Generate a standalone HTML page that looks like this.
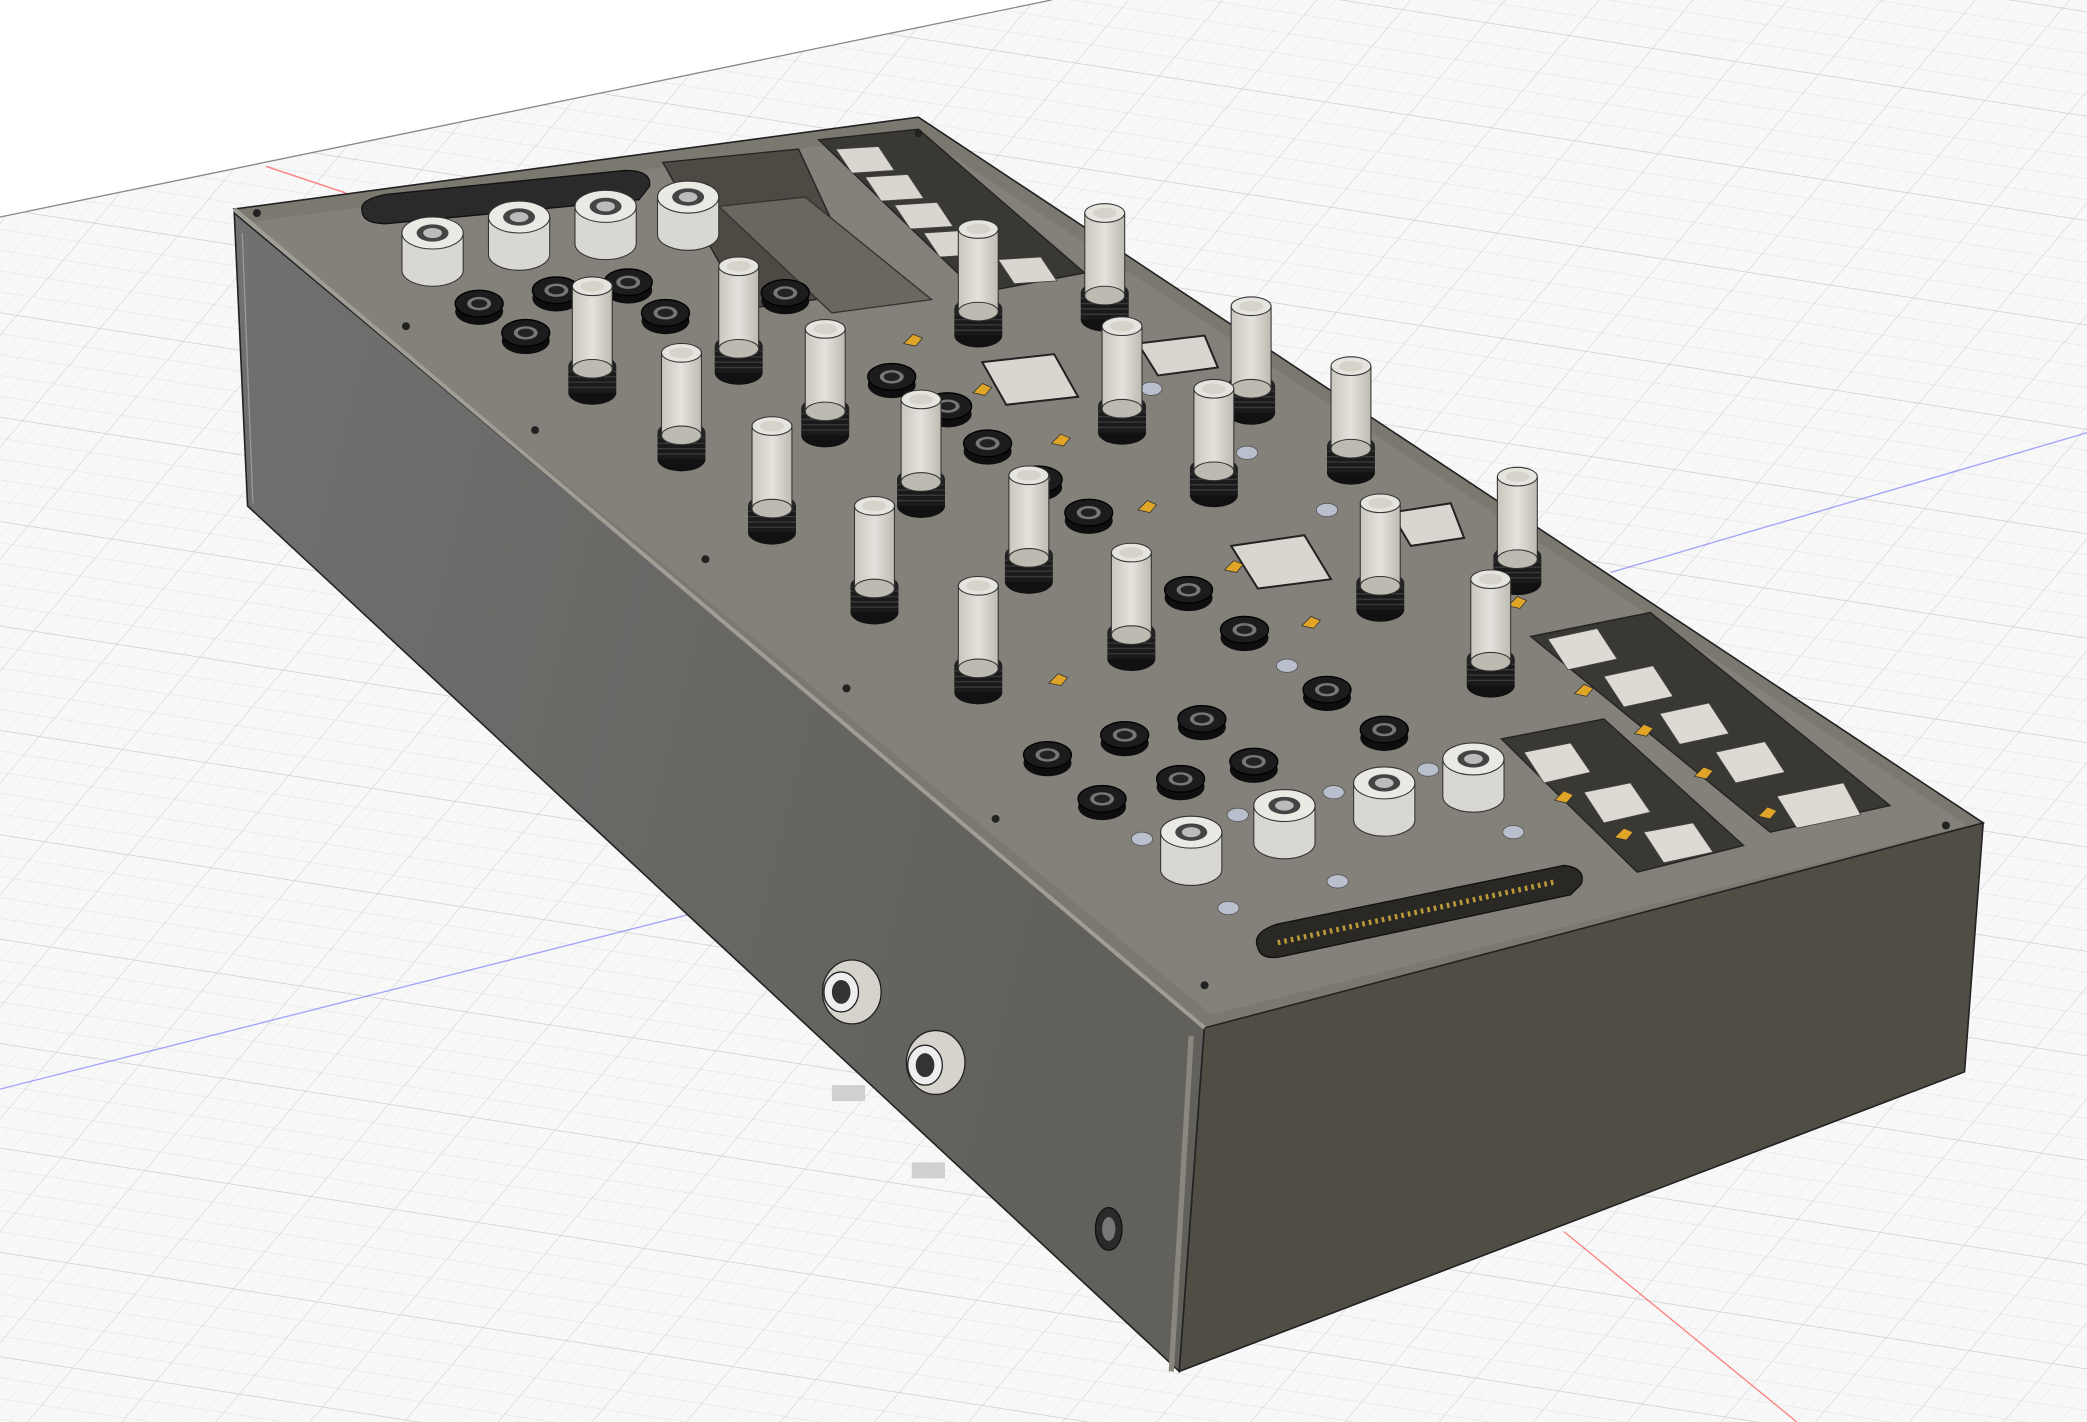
<!DOCTYPE html>
<html><head><meta charset="utf-8"><style>
html,body{margin:0;padding:0;width:2087px;height:1422px;overflow:hidden;background:#fff}
svg{display:block}
</style></head><body>
<svg width="2087" height="1422" viewBox="0 0 1568 1068" preserveAspectRatio="none" xmlns="http://www.w3.org/2000/svg">
<defs>
<pattern id="g" width="14" height="14" patternUnits="userSpaceOnUse" patternTransform="skewX(-35) rotate(8)">
<rect width="14" height="14" fill="#f8f8f8"/>
<path d="M14 0V14M0 14H14" stroke="#e2e2e2" stroke-width="0.7"/>
</pattern>
<pattern id="G" width="70" height="70" patternUnits="userSpaceOnUse" patternTransform="skewX(-35) rotate(8)">
<path d="M70 0V70M0 70H70" stroke="#cdcdcd" stroke-width="0.9"/>
</pattern>
<linearGradient id="side" x1="0" y1="0" x2="1" y2="0.3">
<stop offset="0" stop-color="#707070"/><stop offset="1" stop-color="#62605a"/>
</linearGradient>
<linearGradient id="cap" x1="0" y1="0" x2="1" y2="0">
<stop offset="0" stop-color="#c9c6bd"/><stop offset="0.5" stop-color="#e4e2dc"/><stop offset="1" stop-color="#bdbab1"/>
</linearGradient>
<g id="knob">
<ellipse cx="0" cy="80" rx="18" ry="9" fill="#111"/>
<rect x="-18" y="60" width="36" height="20" fill="#1a1a1a"/>
<path d="M-18 64H18M-18 68H18M-18 72H18M-18 76H18" stroke="#3a3a3a" stroke-width="1"/>
<ellipse cx="0" cy="60" rx="18" ry="9" fill="#222"/>
<rect x="-15" y="0" width="30" height="62" fill="url(#cap)" stroke="#333" stroke-width="0.8"/>
<ellipse cx="0" cy="62" rx="15" ry="7" fill="#bdbab1" stroke="#333" stroke-width="0.8"/>
<ellipse cx="0" cy="0" rx="15" ry="7" fill="#e6e4de" stroke="#333" stroke-width="0.8"/>
<ellipse cx="0" cy="0" rx="9" ry="4" fill="#d6d3ca"/>
</g>
<g id="bj">
<ellipse cx="0" cy="6" rx="18" ry="10" fill="#0e0e0e"/>
<ellipse cx="0" cy="0" rx="18" ry="10" fill="#1c1c1c" stroke="#000"/>
<ellipse cx="0" cy="0" rx="9" ry="5" fill="#777"/>
<ellipse cx="0" cy="0" rx="6" ry="3.2" fill="#222"/>
</g>
<g id="lj">
<path d="M-23 0V28A23 12 0 0 0 23 28V0Z" fill="#d9d7d1" stroke="#333" stroke-width="0.8"/>
<ellipse cx="0" cy="0" rx="23" ry="12" fill="#ebe9e4" stroke="#333" stroke-width="0.8"/>
<ellipse cx="0" cy="0" rx="12" ry="6.5" fill="#444"/>
<ellipse cx="0" cy="0" rx="7" ry="3.8" fill="#bbb"/>
</g>
<g id="led"><ellipse cx="0" cy="0" rx="8" ry="5" fill="#b9bfcc" stroke="#555" stroke-width="0.6"/></g>
<g id="amb"><path d="M-7 3L0 -4L7 -1L2 5Z" fill="#e0a526" stroke="#333" stroke-width="0.6"/></g>
</defs>
<path d="M0 163L790 0H1568V1068H0Z" fill="url(#g)"/>
<path d="M0 163L790 0H1568V1068H0Z" fill="url(#G)"/>
<path d="M0 163L790 0" stroke="#888" stroke-width="1"/>
<path d="M0 818L900 590M1210 430L1568 325" stroke="#6b6bff" stroke-width="1" opacity="0.6"/>
<path d="M200 125L260 145M1175 925L1350 1068" stroke="#ff5050" stroke-width="1" opacity="0.7"/>
<rect x="625" y="815" width="25" height="12" fill="#d0d0d0"/>
<rect x="685" y="873" width="25" height="12" fill="#d0d0d0"/>
<path d="M176 160L905 770L886 1030L186 380Z" fill="url(#side)" stroke="#222" stroke-width="1.2"/>
<path d="M182 175L190 378" stroke="#999" stroke-width="1"/>
<path d="M905 770L1490 618L1476 805L886 1030Z" fill="#504d45" stroke="#222" stroke-width="1.2"/>
<path d="M895 778L880 1030" stroke="#8a877f" stroke-width="4"/>
<path d="M176 157L690 88L1490 618L905 772Z" fill="#7b7870" stroke="#222" stroke-width="1.2"/>
<path d="M186 167L690 100L1478 620L910 762Z" fill="#84817a"/>
<path d="M176 157L905 772" stroke="#a09d95" stroke-width="3"/>
<path d="M272 158Q270 150 290 146L470 128Q490 128 488 140L480 150L290 168Q272 168 272 158Z" fill="#2a2a2a" stroke="#111"/>
<path d="M945 712Q940 700 960 694L1175 650Q1192 652 1188 664L1180 672L965 718Q948 722 945 712Z" fill="#2a2824" stroke="#111"/>
<path d="M960 708L1170 662" stroke="#b89a3a" stroke-width="4" stroke-dasharray="2 3"/>
<path d="M498 122L600 112L650 220L560 232Z" fill="#4d4a44" stroke="#222"/>
<path d="M540 155L605 148L700 225L625 235Z" fill="#6a675f" stroke="#333"/>
<path d="M615 105L690 97L815 205L735 220Z" fill="#3a3833" stroke="#222"/>
<g fill="#d8d6cf" stroke="#444" stroke-width="0.6">
<path d="M628 112L660 110L672 128L640 130Z"/><path d="M650 133L682 131L694 149L662 151Z"/>
<path d="M672 154L704 152L716 170L684 172Z"/><path d="M694 175L726 173L738 191L706 193Z"/>
<path d="M750 195L782 193L794 211L762 213Z"/>
</g>
<g fill="#d8d6cf" stroke="#222" stroke-width="1.5">
<path d="M738 272L792 266L810 298L756 304Z"/>
<path d="M855 258L905 252L915 276L870 282Z"/>
<path d="M925 410L980 402L1000 435L945 442Z"/>
<path d="M1045 385L1090 378L1100 404L1060 410Z"/>
</g>
<path d="M1150 478L1240 460L1420 605L1330 625Z" fill="#3a3833" stroke="#222"/>
<path d="M1128 555L1205 540L1310 635L1230 655Z" fill="#3a3833" stroke="#222"/>
<g fill="#dcdad3" stroke="#444" stroke-width="0.6">
<path d="M1163 480L1200 472L1215 495L1178 503Z"/><path d="M1205 508L1242 500L1257 523L1220 531Z"/>
<path d="M1247 536L1284 528L1299 551L1262 559Z"/><path d="M1289 565L1326 557L1341 580L1304 588Z"/>
<path d="M1335 598L1385 588L1398 612L1350 622Z"/>
<path d="M1145 565L1180 558L1195 580L1160 588Z"/><path d="M1190 595L1225 588L1240 610L1205 618Z"/>
<path d="M1235 625L1272 618L1287 640L1250 648Z"/>
</g>
<g fill="#222"><circle cx="193" cy="160" r="3"/><circle cx="690" cy="100" r="3"/><circle cx="402" cy="323" r="3"/><circle cx="530" cy="420" r="3"/><circle cx="636" cy="517" r="3"/><circle cx="748" cy="615" r="3"/><circle cx="905" cy="740" r="3"/><circle cx="1462" cy="620" r="3"/><circle cx="305" cy="245" r="3"/></g>
<g>
<use href="#amb" x="686" y="255"/><use href="#amb" x="738" y="292"/><use href="#amb" x="797" y="330"/><use href="#amb" x="862" y="380"/><use href="#amb" x="927" y="425"/><use href="#amb" x="985" y="467"/><use href="#amb" x="795" y="510"/><use href="#amb" x="1190" y="518"/><use href="#amb" x="1235" y="548"/><use href="#amb" x="1280" y="580"/><use href="#amb" x="1328" y="610"/><use href="#amb" x="1175" y="598"/><use href="#amb" x="1220" y="626"/><use href="#amb" x="1140" y="452"/>
</g>
<use href="#led" x="865" y="292"/><use href="#led" x="937" y="340"/><use href="#led" x="997" y="383"/><use href="#led" x="967" y="500"/><use href="#led" x="930" y="612"/><use href="#led" x="858" y="630"/><use href="#led" x="1002" y="595"/><use href="#led" x="1073" y="578"/><use href="#led" x="1137" y="625"/><use href="#led" x="923" y="682"/><use href="#led" x="1005" y="662"/>
<use href="#lj" x="517" y="148"/><use href="#lj" x="455" y="155"/><use href="#lj" x="390" y="163"/><use href="#lj" x="325" y="175"/>
<g>
<use href="#bj" x="472" y="212"/><use href="#bj" x="418" y="218"/><use href="#bj" x="360" y="228"/><use href="#bj" x="500" y="235"/><use href="#bj" x="395" y="250"/><use href="#bj" x="590" y="220"/>
<use href="#bj" x="670" y="283"/><use href="#bj" x="712" y="305"/><use href="#bj" x="742" y="333"/><use href="#bj" x="780" y="360"/><use href="#bj" x="818" y="385"/><use href="#bj" x="893" y="443"/><use href="#bj" x="935" y="473"/><use href="#bj" x="997" y="518"/>
<use href="#bj" x="845" y="552"/><use href="#bj" x="903" y="540"/><use href="#bj" x="1040" y="548"/><use href="#bj" x="787" y="567"/><use href="#bj" x="887" y="585"/><use href="#bj" x="942" y="572"/><use href="#bj" x="828" y="600"/>
</g>
<g>
<use href="#knob" x="830" y="160"/><use href="#knob" x="735" y="172"/><use href="#knob" x="555" y="200"/><use href="#knob" x="445" y="215"/>
<use href="#knob" x="940" y="230"/><use href="#knob" x="843" y="245"/><use href="#knob" x="620" y="247"/><use href="#knob" x="512" y="265"/>
<use href="#knob" x="1015" y="275"/><use href="#knob" x="912" y="292"/><use href="#knob" x="692" y="300"/><use href="#knob" x="580" y="320"/>
<use href="#knob" x="1140" y="358"/><use href="#knob" x="773" y="357"/><use href="#knob" x="1037" y="378"/><use href="#knob" x="657" y="380"/>
<use href="#knob" x="850" y="415"/><use href="#knob" x="1120" y="435"/><use href="#knob" x="735" y="440"/>
</g>
<use href="#lj" x="1107" y="570"/><use href="#lj" x="1040" y="588"/><use href="#lj" x="965" y="605"/><use href="#lj" x="895" y="625"/>
<g>
<ellipse cx="640" cy="745" rx="22" ry="24" fill="#d5d3cc" stroke="#222"/><ellipse cx="632" cy="745" rx="13" ry="15" fill="#eee" stroke="#222"/><ellipse cx="632" cy="745" rx="7" ry="9" fill="#333"/>
<ellipse cx="703" cy="798" rx="22" ry="24" fill="#d5d3cc" stroke="#222"/><ellipse cx="695" cy="800" rx="13" ry="15" fill="#eee" stroke="#222"/><ellipse cx="695" cy="800" rx="7" ry="9" fill="#333"/>
<ellipse cx="833" cy="923" rx="10" ry="16" fill="#2a2a2a" stroke="#111"/><ellipse cx="833" cy="923" rx="5" ry="9" fill="#777"/>
</g>
</svg>
</body></html>
